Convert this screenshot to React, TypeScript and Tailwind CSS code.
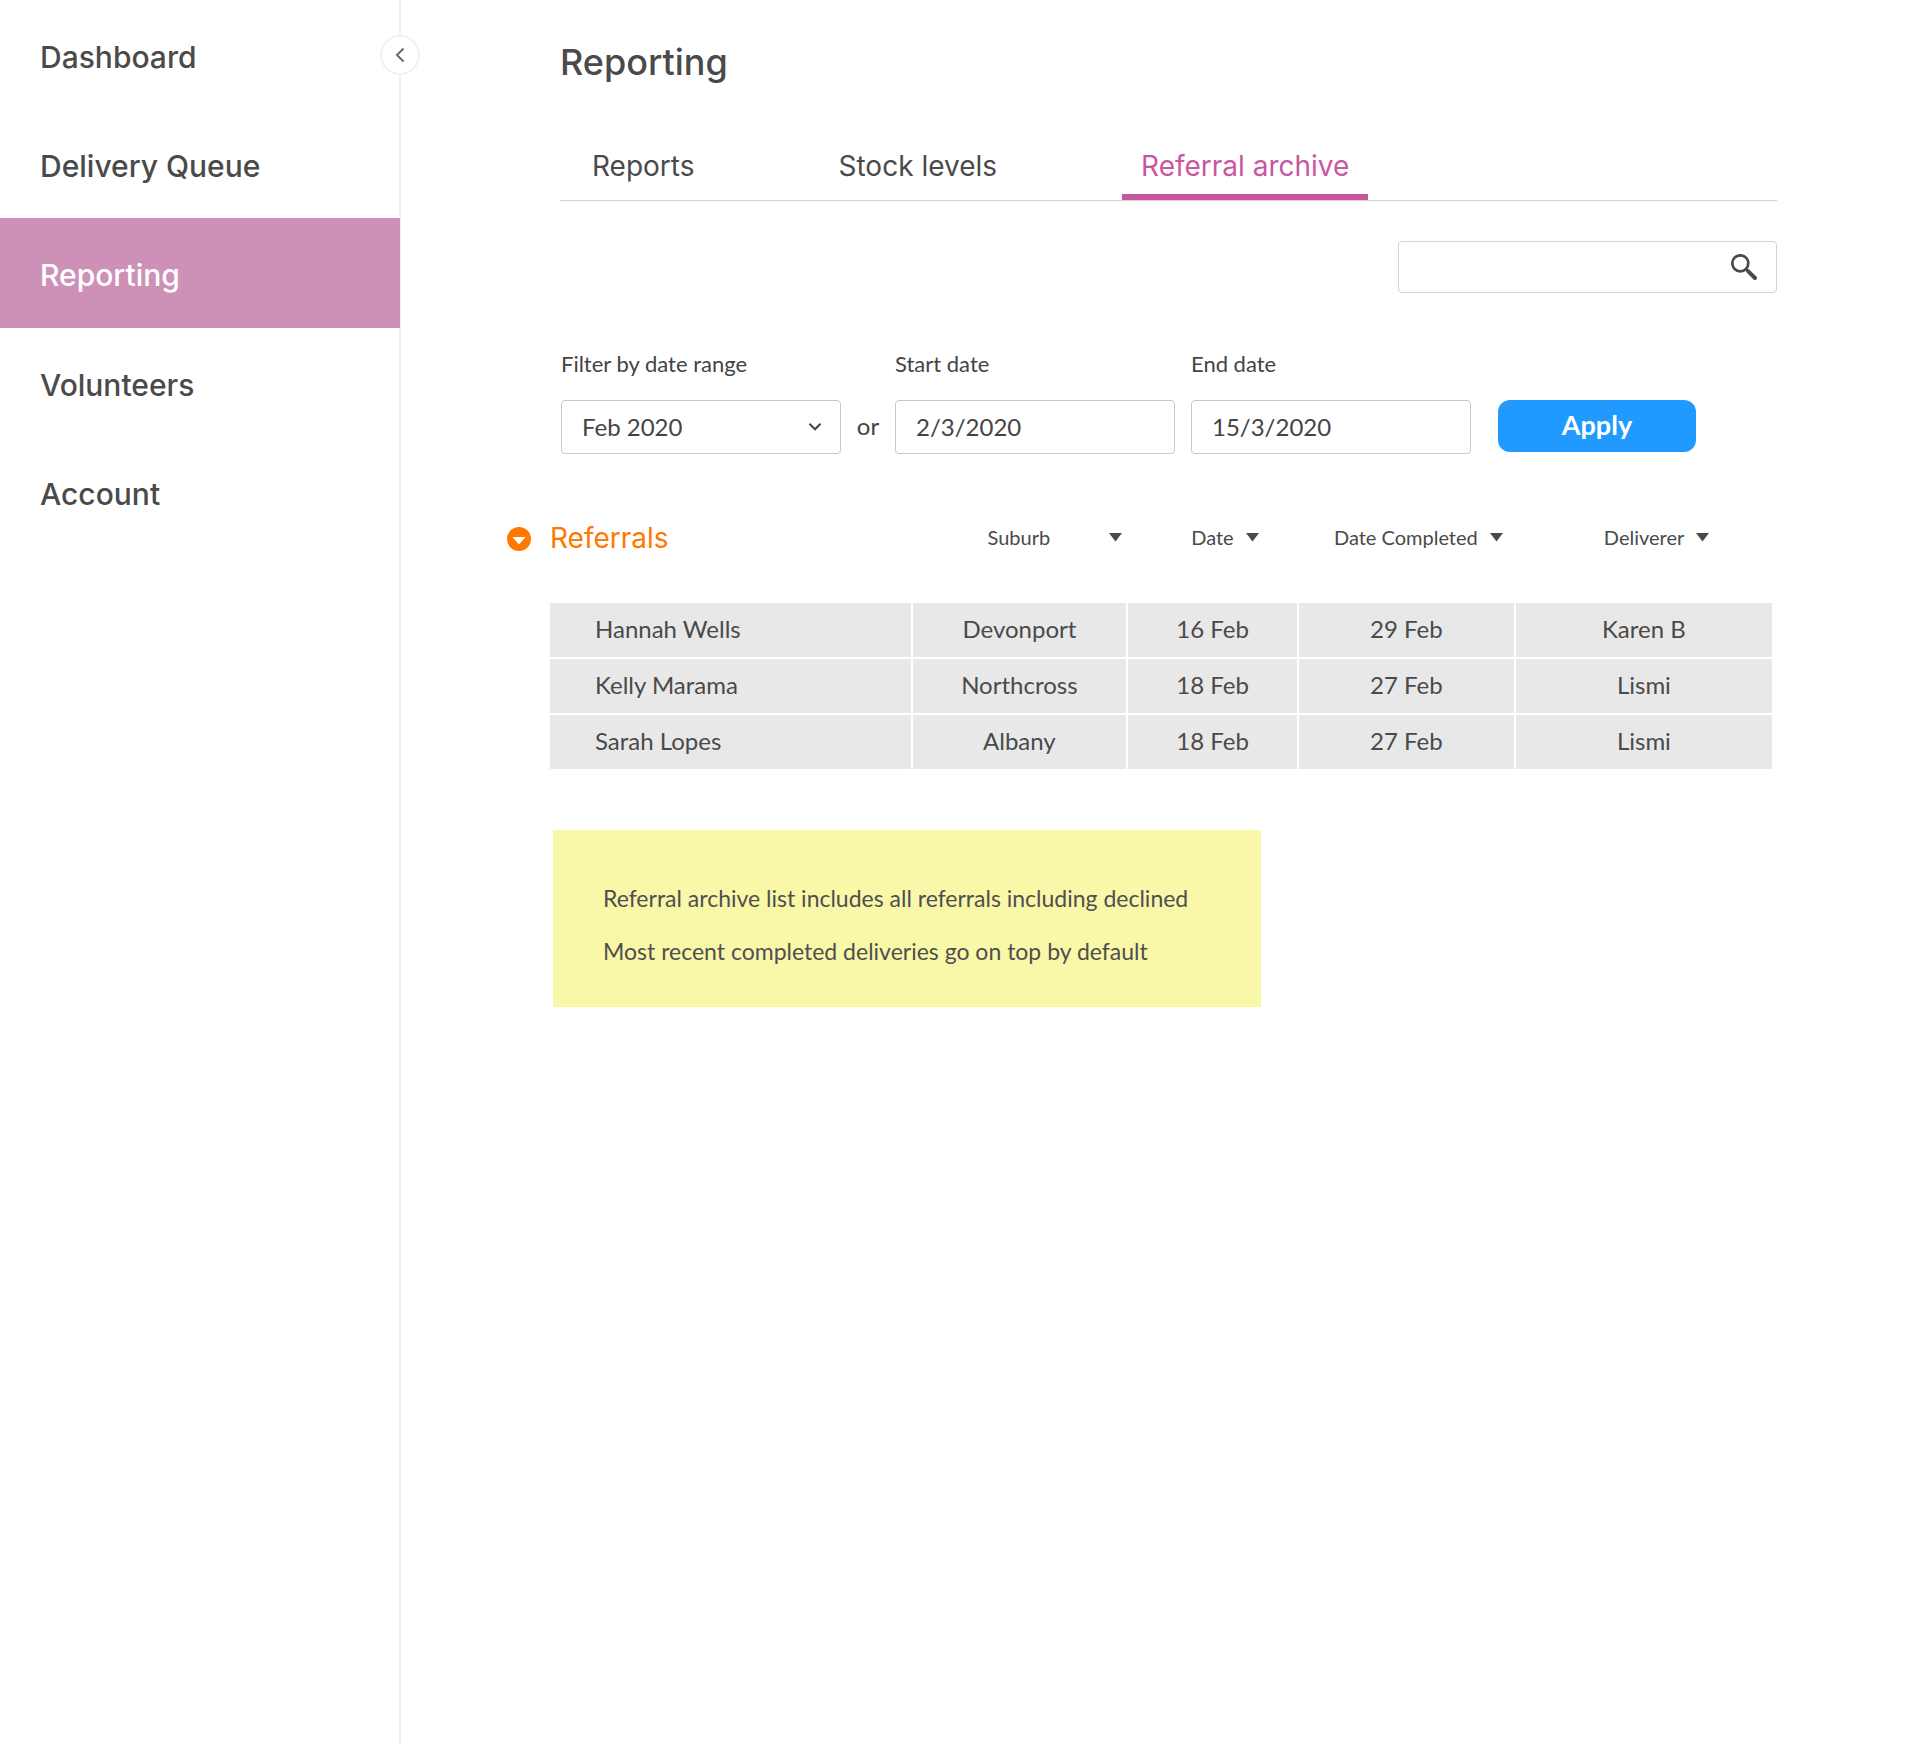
import { useState } from "react";

const navItems = ["Dashboard", "Delivery Queue", "Reporting", "Volunteers", "Account"];
const tabs = ["Reports", "Stock levels", "Referral archive"];

const columns = [
  { label: "Suburb", layout: "justify-between pl-[75px] pr-1" },
  { label: "Date", layout: "gap-3 pl-[63px]" },
  { label: "Date Completed", layout: "gap-3 pl-[35px]" },
  { label: "Deliverer", layout: "gap-3 pl-[88px]" },
];

const referrals = [
  ["Hannah Wells", "Devonport", "16 Feb", "29 Feb", "Karen B"],
  ["Kelly Marama", "Northcross", "18 Feb", "27 Feb", "Lismi"],
  ["Sarah Lopes", "Albany", "18 Feb", "27 Feb", "Lismi"],
];

function Sidebar() {
  return (
    <aside className="relative w-[401px] shrink-0 border-r-2 border-[#f2f2f2]">
      <nav className="flex flex-col font-['Inter',sans-serif] text-[30px] leading-10 font-medium text-[#4a4a4a]">
        {navItems.map((item) =>
          item === "Reporting" ? (
            <a key={item} href="#" aria-current="page" className="-mr-px flex h-[110px] items-center bg-[#cd91b8] pt-1 pl-10 text-white">
              {item}
            </a>
          ) : (
            <a key={item} href="#" className="flex h-[109px] items-center pt-1 pl-10">
              {item}
            </a>
          ),
        )}
      </nav>
      <button
        type="button"
        aria-label="Collapse menu"
        className="absolute top-[35px] -right-[21px] flex size-10 items-center justify-center rounded-full border-2 border-[#f2f2f2] bg-white"
      >
        <svg width="10" height="16" viewBox="0 0 10 16" fill="none" stroke="#6b6b6b" strokeWidth="2">
          <path d="M8.5 1.5 L2 8 L8.5 14.5" />
        </svg>
      </button>
    </aside>
  );
}

function Tabs() {
  return (
    <nav className="ml-[53px] mt-[60px] flex gap-[106px] border-b border-[#d3d3d3] pl-[13px] font-['Inter',sans-serif] text-[28px] leading-10 text-[#4a4a4a]">
      {tabs.map((tab) =>
        tab === "Referral archive" ? (
          <a key={tab} href="#" aria-current="page" className="border-b-6 border-[#c8579f] px-[19px] pb-2 text-[#c8579f]">
            {tab}
          </a>
        ) : (
          <a key={tab} href="#" className="px-[19px] pb-2">
            {tab}
          </a>
        ),
      )}
    </nav>
  );
}

function Search() {
  return (
    <form role="search" className="mt-10 flex justify-end">
      <div className="flex h-[52px] w-[379px] items-center rounded border border-[#d3d3d3] pr-[19px]">
        <input type="search" aria-label="Search referrals" className="h-full min-w-0 flex-1 px-5 text-2xl outline-none" />
        <button type="submit" aria-label="Search">
          <svg width="26" height="26" viewBox="0 0 26 26" fill="none" stroke="#4a4a4a">
            <circle cx="9.3" cy="9.3" r="8" strokeWidth="2.7" />
            <path d="M15 15 L17.5 17.5" strokeWidth="2.5" />
            <path d="M17.3 17.3 L24 24" strokeWidth="4" strokeLinecap="round" />
          </svg>
        </button>
      </div>
    </form>
  );
}

function Filters() {
  return (
    <form className="mt-[55px] ml-[54px] flex text-2xl text-[#444444]">
      <div className="flex flex-col gap-5">
        <label htmlFor="range" className="text-[22px] leading-8">
          Filter by date range
        </label>
        <div className="relative">
          <select id="range" className="h-[54px] w-[280px] appearance-none rounded border border-[#c8c8c8] bg-white px-5">
            <option>Feb 2020</option>
          </select>
          <svg
            className="pointer-events-none absolute top-[22px] right-[19px]"
            width="14"
            height="10"
            viewBox="0 0 14 10"
            fill="none"
            stroke="#444444"
            strokeWidth="2"
          >
            <path d="M1.5 1.8 L7 7.3 L12.5 1.8" />
          </svg>
        </div>
      </div>
      <span className="mt-[52px] w-[54px] text-center leading-[52px]">or</span>
      <div className="flex flex-col gap-5">
        <label htmlFor="start" className="text-[22px] leading-8">
          Start date
        </label>
        <input id="start" type="text" defaultValue="2/3/2020" className="h-[54px] w-[280px] rounded border border-[#c8c8c8] px-5 pb-0.5" />
      </div>
      <div className="ml-4 flex flex-col gap-5">
        <label htmlFor="end" className="text-[22px] leading-8">
          End date
        </label>
        <input id="end" type="text" defaultValue="15/3/2020" className="h-[54px] w-[280px] rounded border border-[#c8c8c8] px-5 pb-0.5" />
      </div>
      <button type="button" className="mt-[52px] ml-[27px] h-[52px] w-[198px] rounded-xl bg-[#209aff] pb-0.5 text-[27px] font-bold text-white">
        Apply
      </button>
    </form>
  );
}

function SortArrow() {
  return (
    <svg width="13" height="9" viewBox="0 0 13 9" fill="#4a4a4a">
      <path d="M0 0 H13 L6.5 8.5 Z" />
    </svg>
  );
}

function ReferralTable() {
  const [open, setOpen] = useState(true);
  return (
    <section className="mt-[19px] mr-[3px] flex items-start gap-[17px]">
      <button type="button" aria-label="Toggle referrals" aria-expanded={open} onClick={() => setOpen(!open)} className="mt-[54px]">
        <svg width="24" height="24" viewBox="0 0 24 24">
          <circle cx="12" cy="12" r="12" fill="#ff7800" />
          <path d="M5.5 10 H18.5 L12 17.5 Z" fill="#ffffff" />
        </svg>
      </button>
      <table className="flex-1 table-fixed border-separate border-spacing-[2px] text-2xl text-[#4a4a4a]">
        <colgroup>
          <col className="w-[29.7%]" />
          <col className="w-[17.6%]" />
          <col className="w-[13.9%]" />
          <col className="w-[17.7%]" />
          <col className="w-[21.1%]" />
        </colgroup>
        <thead>
          <tr className="h-[126px]">
            <th scope="col" className="p-0 pt-0.5 text-left font-['Inter',sans-serif] text-[28px] font-normal text-[#ff7800]">
              Referrals
            </th>
            {columns.map(({ label, layout }) => (
              <th key={label} scope="col" className="p-0 pb-0.5 text-xl font-normal">
                <button type="button" className={`flex w-full items-center whitespace-nowrap ${layout}`}>
                  {label}
                  <SortArrow />
                </button>
              </th>
            ))}
          </tr>
        </thead>
        {open && (
          <tbody>
            {referrals.map(([name, ...rest]) => (
              <tr key={name} className="h-[54px]">
                <td className="bg-[#e8e8e8] p-0 pb-0.5 pl-[45px]">{name}</td>
                {rest.map((value, i) => (
                  <td key={i} className="bg-[#e8e8e8] p-0 pb-0.5 text-center">
                    {value}
                  </td>
                ))}
              </tr>
            ))}
          </tbody>
        )}
      </table>
    </section>
  );
}

export default function App() {
  return (
    <div className="flex min-h-screen bg-white font-['Lato',sans-serif]">
      <Sidebar />
      <main className="min-w-0 flex-1 pt-[38px] pr-[143px] pb-16 pl-[106px]">
        <h1 className="ml-[53px] font-['Inter',sans-serif] text-[36px] leading-[48px] font-medium text-[#4a4a4a]">Reporting</h1>
        <Tabs />
        <Search />
        <Filters />
        <ReferralTable />
        <div className="mt-[59px] ml-[46px] w-[708px] max-w-full bg-[#f9f7a8] pt-[42px] pr-10 pb-[29px] pl-[50px] text-[23px] leading-[53px] text-[#4f4f4f]">
          <p>Referral archive list includes all referrals including declined</p>
          <p>Most recent completed deliveries go on top by default</p>
        </div>
      </main>
    </div>
  );
}
